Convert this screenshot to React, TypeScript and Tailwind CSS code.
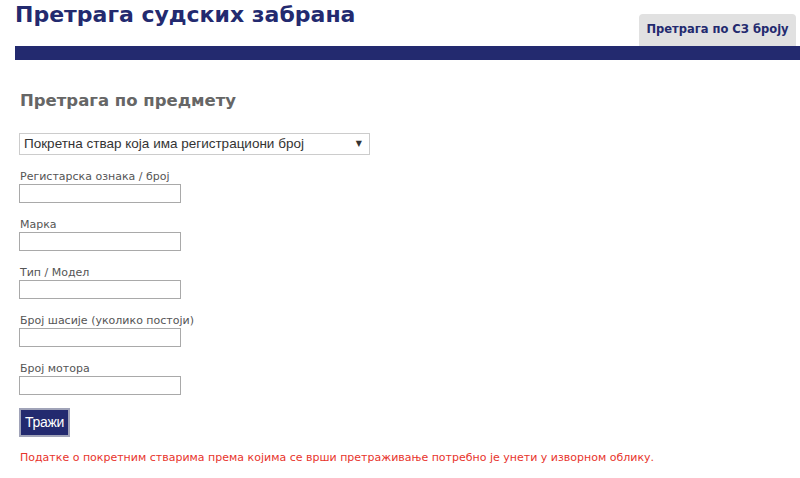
import { useState } from 'react'

const FIELDS = [
  'Регистарска ознака / број',
  'Марка',
  'Тип / Модел',
  'Број шасије (уколико постоји)',
  'Број мотора',
]

export default function App() {
  const [values, setValues] = useState<string[]>(FIELDS.map(() => ''))

  return (
    <div className="w-[800px] h-[478px] bg-white overflow-hidden font-['DejaVu_Sans',sans-serif]">
      {/* Header */}
      <div className="h-[46px] pl-[15px] flex items-end justify-between">
        <h1 className="self-start pt-[1px] text-[22px] leading-[28px] font-bold text-[#232a6f]">
          Претрага судских забрана
        </h1>
        <button className="mr-[4px] w-[157px] h-[32px] bg-[#e1e1e1] rounded-t-[4px] text-[11.5px] font-bold text-[#232a6f]">
          Претрага по СЗ броју
        </button>
      </div>
      <div className="ml-[15px] h-[14px] bg-[#232a6f]" />

      {/* Form */}
      <div className="pl-[19px] pt-[30px]">
        <h2 className="pl-[1px] text-[16.5px] leading-[22px] font-bold text-[#666666]">Претрага по предмету</h2>

        <div className="mt-[21px] w-[351px] h-[22px] border border-[#cccccc] flex items-center justify-between pl-[4px] pr-[7px]">
          <span className="text-[13.5px] text-[#333333] font-['Liberation_Sans',sans-serif]">
            Покретна ствар која има регистрациони број
          </span>
          <span className="text-[8px] text-[#333333]">▼</span>
        </div>

        <div className="mt-[14px] flex flex-col gap-[14px]">
          {FIELDS.map((label, i) => (
            <div key={label} className="flex flex-col">
              <label className="pl-[1px] text-[11px] leading-[15px] text-[#555555]">{label}</label>
              <input
                value={values[i]}
                onChange={e => setValues(v => v.map((x, j) => (j === i ? e.target.value : x)))}
                className="w-[162px] h-[19px] border border-[#a9a9a9] bg-white outline-none"
              />
            </div>
          ))}
        </div>

        <button className="mt-[13px] h-[29px] px-[4px] bg-[#232a6f] border-2 border-[#a0a3b8] text-white text-[14px] tracking-[-0.3px] font-['Liberation_Sans',sans-serif]">
          Тражи
        </button>

        <p className="mt-[13px] pl-[1px] text-[11px] text-[#e8342c]">
          Податке о покретним стварима према којима се врши претраживање потребно је унети у изворном облику.
        </p>
      </div>
    </div>
  )
}
